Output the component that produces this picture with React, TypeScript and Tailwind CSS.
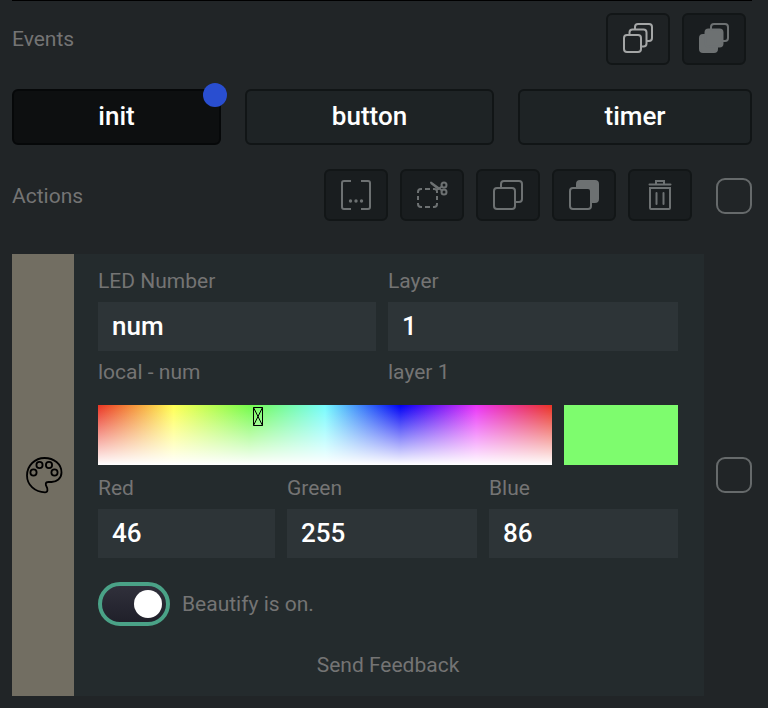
import React from "react";

function IconButton({ children, bright = false }: { children: React.ReactNode; bright?: boolean }) {
  return (
    <button
      className={`flex h-[52px] w-16 items-center justify-center rounded-md border-2 border-[#121617] ${
        bright ? "bg-[#1e2224] text-[#a4a6a6]" : "bg-[#191d1f] text-[#6d7172]"
      }`}
    >
      {children}
    </button>
  );
}

function Icon({ children }: { children: React.ReactNode }) {
  return (
    <svg width="32" height="32" viewBox="0 0 32 32" fill="none" stroke="currentColor" strokeWidth="2" strokeLinecap="round" strokeLinejoin="round">
      {children}
    </svg>
  );
}

function EventButton({ label, className }: { label: string; className: string }) {
  return (
    <button className={`relative h-14 rounded-md border-2 pb-0.5 text-[26px] leading-[30px] font-medium text-white ${className}`}>
      {label}
    </button>
  );
}

function Label({ children }: { children: React.ReactNode }) {
  return <div className="h-6 text-[21px] leading-6 text-[#747474]">{children}</div>;
}

function Field({ value }: { value: string }) {
  return (
    <div className="flex h-[49px] items-center bg-[#2d3437] px-3.5 pb-0.5 text-[26px] leading-[30px] font-medium text-white">{value}</div>
  );
}

function Check() {
  return <div className="h-9 w-9 shrink-0 rounded-[9px] border-2 border-[#666a6b]" />;
}

export default function App() {
  return (
    <div className="h-[708px] w-[768px] overflow-hidden bg-[#212527] pr-4 pl-3 font-['Roboto',sans-serif]">
      <div className="h-px bg-black" />
      <div className="mt-3 flex h-[52px] items-center justify-between pr-1.5">
        <Label>Events</Label>
        <div className="flex gap-3">
          <IconButton bright>
            <Icon>
              <rect x="2" y="12" width="17" height="17" rx="3" />
              <path d="M7.5 12V9.500a3 3 0 0 1 3-3h11a3 3 0 0 1 3 3v11a3 3 0 0 1-3 3h-2M13 6.500V4a3 3 0 0 1 3-3h11a3 3 0 0 1 3 3v11a3 3 0 0 1-3 3h-2" />
            </Icon>
          </IconButton>
          <IconButton>
            <Icon>
              <rect x="2" y="12" width="17" height="17" rx="3" fill="currentColor" />
              <rect x="7.500" y="6.500" width="17" height="17" rx="3" fill="currentColor" />
              <path d="M13 6.500V4a3 3 0 0 1 3-3h11a3 3 0 0 1 3 3v11a3 3 0 0 1-3 3h-2" />
            </Icon>
          </IconButton>
        </div>
      </div>

      <div className="mt-6 flex gap-6">
        <div className="relative">
          <EventButton label="init" className="w-[209px] border-[#060809] bg-[#0d0f10]" />
          <span className="absolute -top-1.5 -right-1.5 h-6 w-6 rounded-full bg-[#294ed0]" />
        </div>
        <EventButton label="button" className="w-[249px] border-[#111516] bg-[#1e2325]" />
        <EventButton label="timer" className="w-[234px] border-[#111516] bg-[#1e2325]" />
      </div>

      <div className="mt-6 flex h-[52px] items-center">
        <div className="flex-1 pt-0.5">
          <Label>Actions</Label>
        </div>
        <div className="mr-6 flex gap-3">
          <IconButton>
            <Icon>
              <path d="M11 2H4a2 2 0 0 0-2 2v24a2 2 0 0 0 2 2h7M21 2h7a2 2 0 0 1 2 2v24a2 2 0 0 1-2 2h-7" strokeLinecap="butt" />
              <g fill="currentColor" stroke="none">
                <circle cx="10.500" cy="22" r="1.700" />
                <circle cx="16" cy="22" r="1.700" />
                <circle cx="21.500" cy="22" r="1.700" />
              </g>
            </Icon>
          </IconButton>
          <IconButton>
            <Icon>
              <path d="M2 14v-1a3 3 0 0 1 3-3h1M9 10h5M2 17v4M2 24v1a3 3 0 0 0 3 3h1M9 28h5M17 28h1a3 3 0 0 0 3-3v-1M21 21v-4M21 14v-1.500a2.500 2.500 0 0 0-2.500-2.500H17" strokeLinecap="butt" />
              <circle cx="28" cy="6" r="2.500" />
              <circle cx="28" cy="13" r="2.500" />
              <path d="M26 11.500 15 3.500M26 7.500 21 10.500" />
              <path d="m15.500 4.500 7 5.500" />
            </Icon>
          </IconButton>
          <IconButton>
            <Icon>
              <rect x="2" y="9" width="21" height="21" rx="3" />
              <path d="M9 9V5a3 3 0 0 1 3-3h15a3 3 0 0 1 3 3v15a3 3 0 0 1-3 3h-4" />
            </Icon>
          </IconButton>
          <IconButton>
            <Icon>
              <rect x="9" y="2" width="21" height="21" rx="3" fill="currentColor" />
              <rect x="2" y="9" width="21" height="21" rx="3" fill="#191d1f" />
            </Icon>
          </IconButton>
          <IconButton>
            <Icon>
              <path d="M6 9h20v20a1 1 0 0 1-1 1H7a1 1 0 0 1-1-1zM5.500 5.500h21M12 5.500V2h8v3.500" strokeLinejoin="miter" />
              <path d="M12.500 14v11M19.500 14v11" />
            </Icon>
          </IconButton>
        </div>
        <div className="pt-0.5">
          <Check />
        </div>
      </div>

      <div className="mt-[33px] flex items-center justify-between">
        <div className="flex h-[442px] w-[692px] bg-[#242b2d]">
          <div className="flex w-[62px] items-center justify-center bg-[#726e62] pl-0.5">
            <svg width="38" height="38" viewBox="0 0 38 38" fill="none" stroke="black" strokeWidth="1.800">
              <path d="M20 36.300C10 36.300 2 29 2 19.500 2 9.500 10 2 19.500 2S36.500 8 36.500 16.500c0 6-5 9.500-10 9.500h-3c-3.500 0-3 3-2 4.500 1.500 2.500 1.500 5.800-1.500 5.800z" />
              <circle cx="8.500" cy="16.500" r="3.100" />
              <circle cx="14.500" cy="9" r="3.100" />
              <circle cx="24" cy="9" r="3.100" />
              <circle cx="29.500" cy="16.500" r="3.100" />
            </svg>
          </div>
          <div className="flex-1 pt-[15px] pr-[26px] pl-6">
            <div className="grid grid-cols-[278px_290px] gap-3">
              <div>
                <Label>LED Number</Label>
                <div className="mt-[9px] mb-[9px]"><Field value="num" /></div>
                <Label>local - num</Label>
              </div>
              <div>
                <Label>Layer</Label>
                <div className="mt-[9px] mb-[9px]"><Field value="1" /></div>
                <Label>layer 1</Label>
              </div>
            </div>
            <div className="mt-[21px] flex gap-3">
              <div className="relative h-[60px] w-[454px] bg-[linear-gradient(to_bottom,transparent,white),linear-gradient(to_right,#ea3323,#ffff54_16.6%,#75fb4c_33.3%,#75fbfd_50%,#0000f5_66.6%,#ea33f7_83.3%,#ea3323)]">
                <svg className="absolute top-0.5 left-[155px]" width="10" height="19" viewBox="0 0 10 19" fill="none" stroke="black">
                  <path d="M.5.500h9v18h-9zM.5.500l9 18M9.500.500l-9 18" />
                </svg>
              </div>
              <div className="h-[60px] w-[114px] bg-[#7efc6e]" />
            </div>
            <div className="mt-[11px] grid grid-cols-[177px_190px_189px] gap-3">
              {[["Red", "46"], ["Green", "255"], ["Blue", "86"]].map(([name, value]) => (
                <div key={name}>
                  <Label>{name}</Label>
                  <div className="mt-[9px]"><Field value={value} /></div>
                </div>
              ))}
            </div>
            <div className="mt-6 flex items-center gap-3">
              <div className="flex h-11 w-[72px] items-center justify-end rounded-full border-4 border-[#4aa287] bg-linear-to-b from-[#30303b] to-[#20202a] pr-1">
                <div className="h-7 w-7 rounded-full bg-white" />
              </div>
              <Label>Beautify is on.</Label>
            </div>
            <div className="mt-[27px] text-center"><Label>Send Feedback</Label></div>
          </div>
        </div>
        <Check />
      </div>
    </div>
  );
}
